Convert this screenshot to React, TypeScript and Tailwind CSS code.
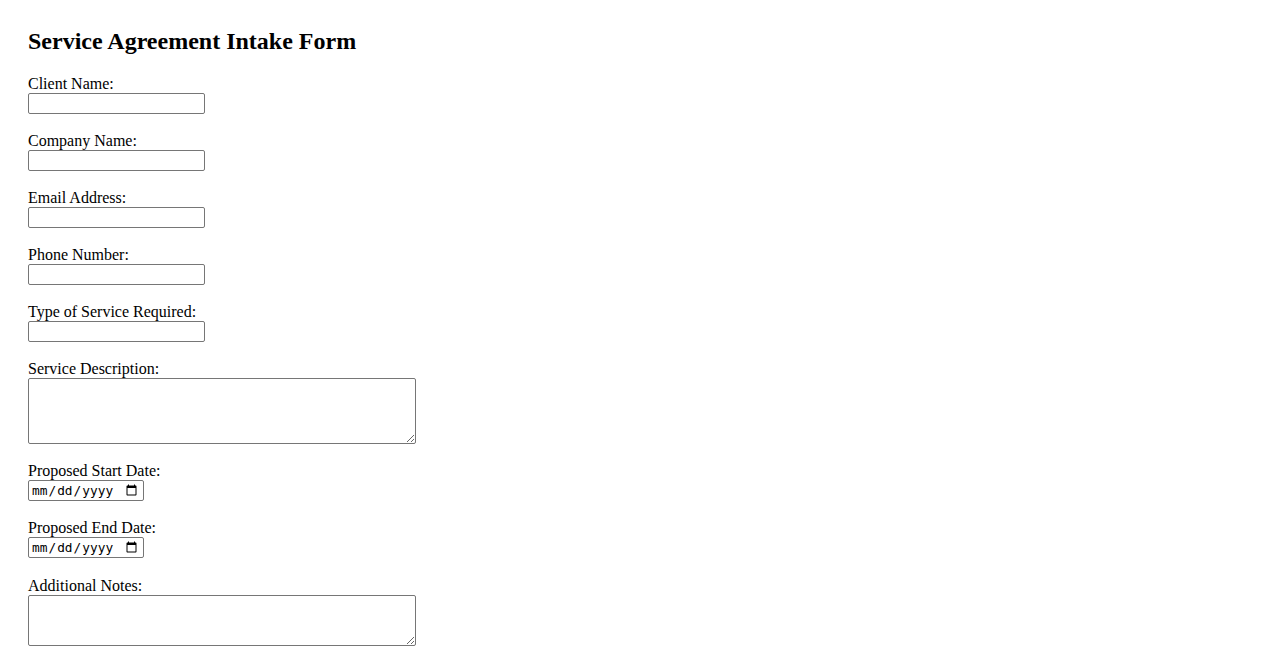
import React from "react";

const Field = ({ label, children, last }: { label: string; children: React.ReactNode; last?: boolean }) => (
  <div className={last ? "flex flex-col items-start mb-[19px]" : "flex flex-col items-start mb-[18px]"}>
    <label className="text-[16px] leading-[18px] h-[18px] whitespace-nowrap">{label}</label>
    {children}
  </div>
);

const textInput =
  "block w-[177px] h-[21px] border border-[#767676] rounded-[2px] bg-white px-[2px] text-[13.33px] font-['Liberation_Sans',sans-serif]";
const dateInput =
  "block w-[116px] h-[21px] border border-[#767676] rounded-[2px] bg-white pl-[2px] pr-[3px] text-[12.8px] text-black font-['DejaVu_Sans_Mono',monospace]";
const area =
  "block w-[388px] border border-[#767676] rounded-[2px] bg-white p-[2px] text-[13.33px] font-['DejaVu_Sans_Mono',monospace]";

export default function App() {
  return (
    <div className="min-h-screen bg-white text-black pt-[27px] pl-[28px] font-['Liberation_Serif',serif]">
      <h2 className="text-[24px] font-bold leading-[28px] h-[28px]">Service Agreement Intake Form</h2>
      <form className="mt-[20px] flex flex-col">
        <Field label="Client Name:">
          <input type="text" className={textInput} />
        </Field>
        <Field label="Company Name:">
          <input type="text" className={textInput} />
        </Field>
        <Field label="Email Address:">
          <input type="email" className={textInput} />
        </Field>
        <Field label="Phone Number:">
          <input type="tel" className={textInput} />
        </Field>
        <Field label="Type of Service Required:">
          <input type="text" className={textInput} />
        </Field>
        <Field label="Service Description:">
          <textarea className={`${area} h-[66px]`} />
        </Field>
        <Field label="Proposed Start Date:">
          <input type="date" className={dateInput} />
        </Field>
        <Field label="Proposed End Date:" last>
          <input type="date" className={dateInput} />
        </Field>
        <Field label="Additional Notes:">
          <textarea className={`${area} h-[51px]`} />
        </Field>
      </form>
    </div>
  );
}
